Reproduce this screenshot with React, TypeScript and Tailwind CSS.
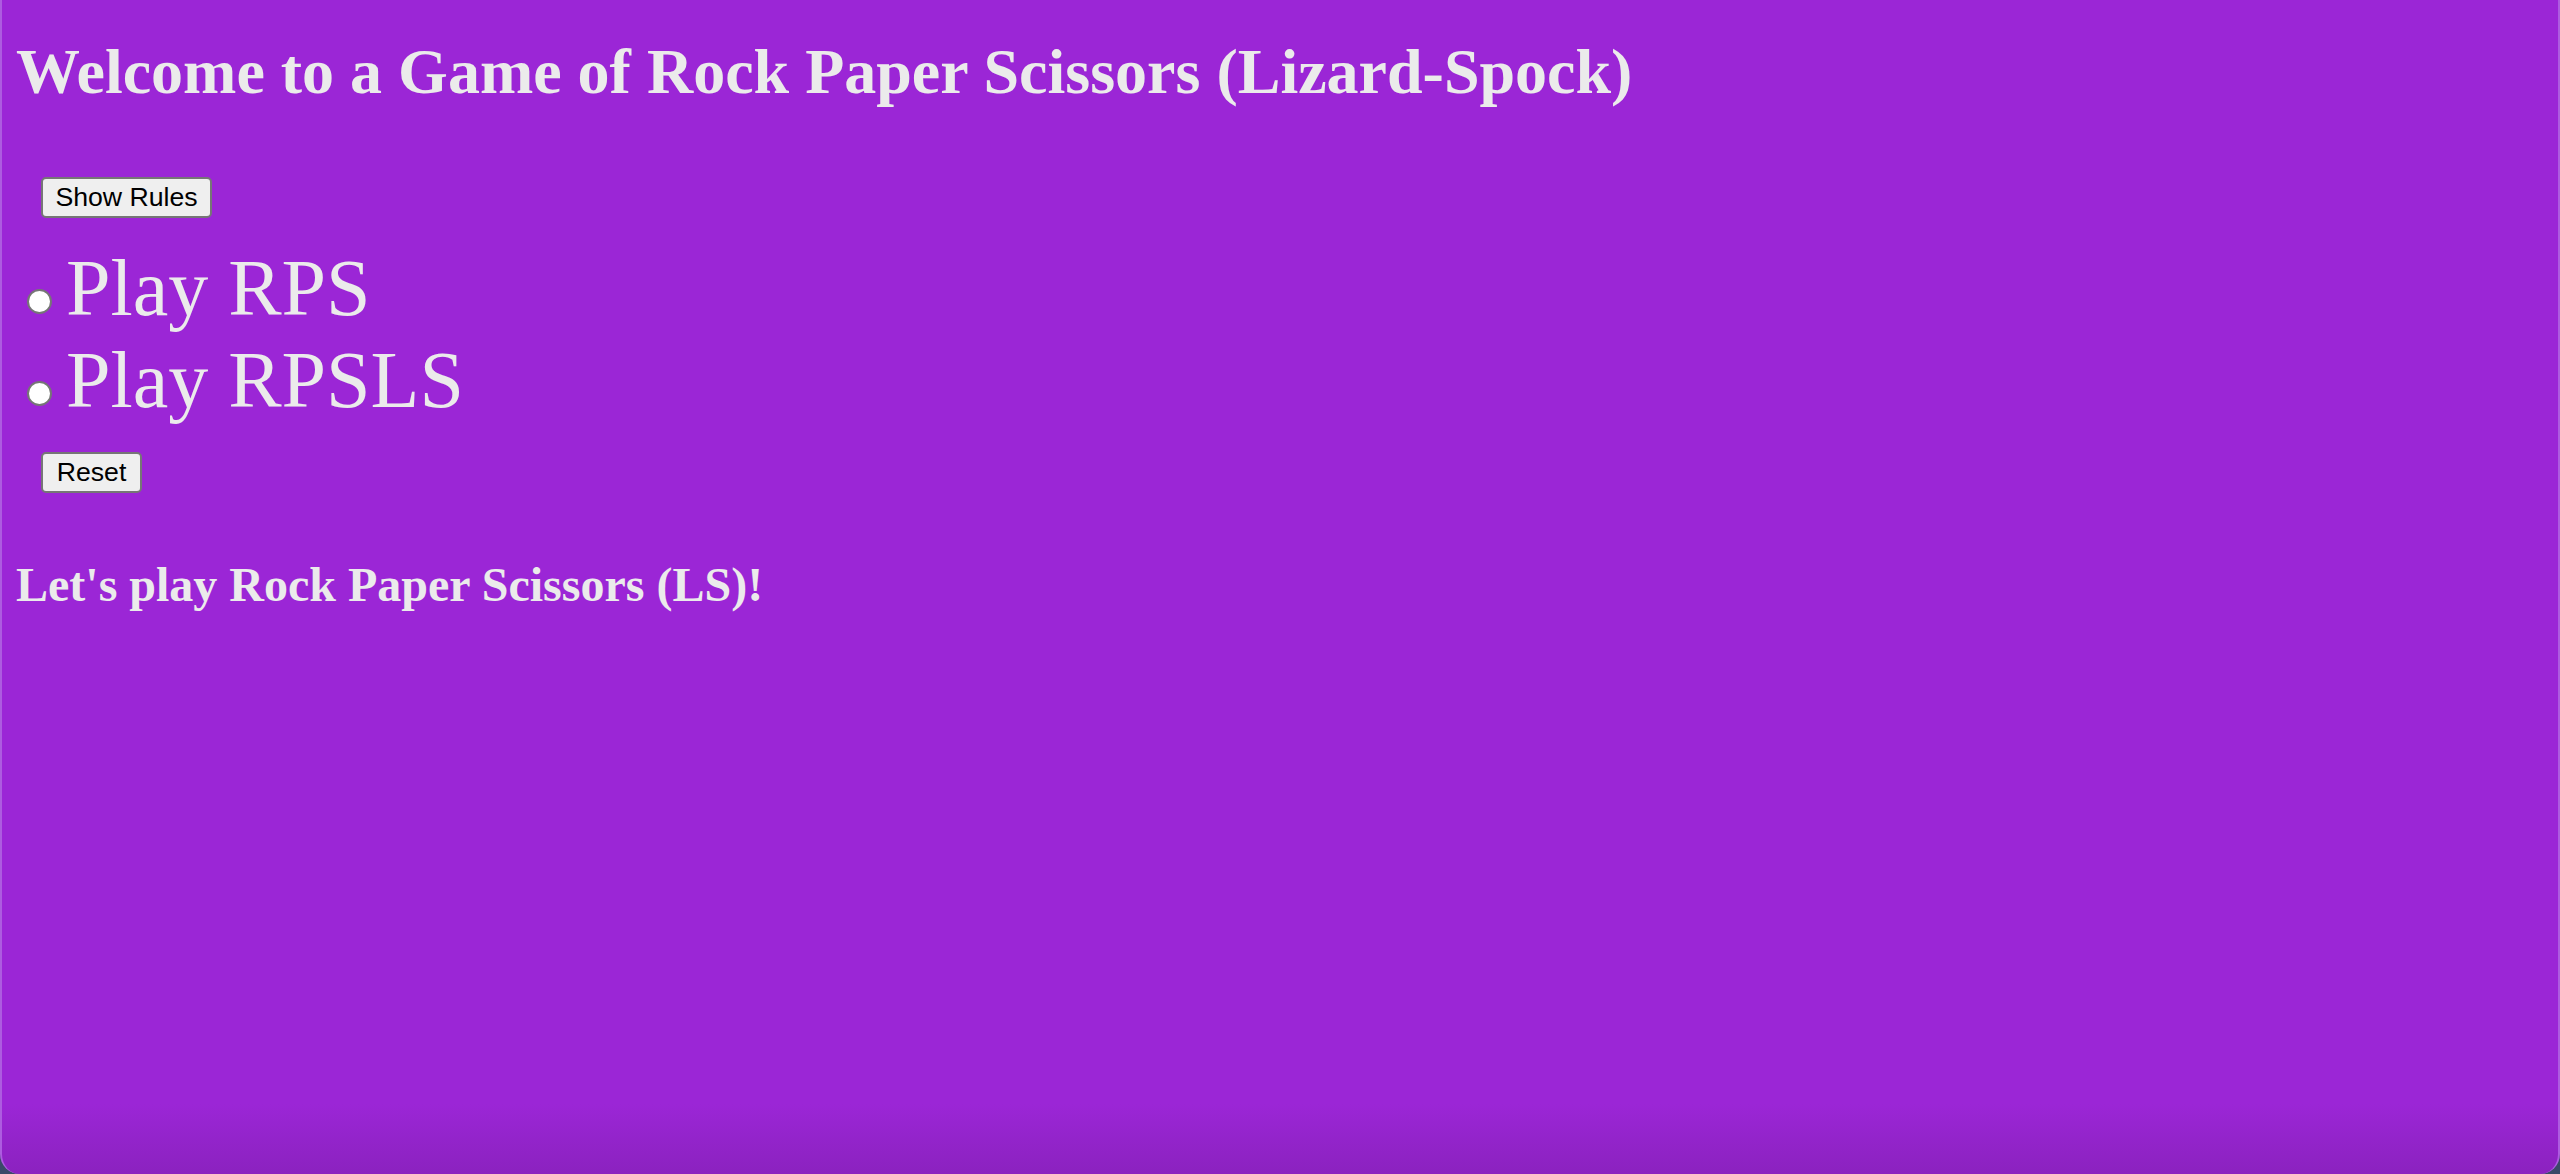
import React, { useState } from 'react';

type Mode = 'rps' | 'rpsls';

const modes: { id: Mode; label: string }[] = [
  { id: 'rps', label: 'Play RPS' },
  { id: 'rpsls', label: 'Play RPSLS' },
];

const btn =
  "h-[41px] bg-[#efefef] border-2 border-[#767676] rounded-[5px] text-black text-[26.67px] leading-none font-['Liberation_Sans',Arial,sans-serif] flex items-center justify-center";

const App: React.FC = () => {
  const [mode, setMode] = useState<Mode | null>(null);

  return (
    <div className="h-screen w-full bg-[#3b4a69]">
      <div className="h-full w-full rounded-b-[20px] overflow-hidden border-l-2 border-r-2 border-[#ad5ce0] bg-[linear-gradient(to_bottom,#9b26d6_calc(100%-70px),#8b22bf)] text-[#ebebeb] font-['Liberation_Serif','Times_New_Roman',serif] pl-[14px]">
        {/* Title */}
        <h1 className="pt-[40px] text-[64px] leading-[64px] font-bold">
          Welcome to a Game of Rock Paper Scissors (Lizard-Spock)
        </h1>

        <button className={`${btn} w-[171px] mt-[73px] ml-[25px]`}>Show Rules</button>

        {/* Mode picker */}
        <div className="mt-[24px] flex flex-col">
          {modes.map((m) => (
            <label key={m.id} className="flex items-start h-[92px] cursor-pointer" onClick={() => setMode(m.id)}>
              <span
                className={`mt-[47px] ml-[11px] w-[25px] h-[25px] rounded-full border-2 border-[#767676] bg-white shrink-0 ${
                  mode === m.id ? 'ring-4 ring-inset ring-[#0a64d6]' : ''
                }`}
              />
              <span className="ml-[14px] text-[80px] leading-[92px]">{m.label}</span>
            </label>
          ))}
        </div>

        <button className={`${btn} w-[101px] mt-[26px] ml-[25px]`} onClick={() => setMode(null)}>
          Reset
        </button>

        <h2 className="mt-[68px] text-[48px] leading-[48px] font-bold">Let's play Rock Paper Scissors (LS)!</h2>
      </div>
    </div>
  );
};

export default App;
